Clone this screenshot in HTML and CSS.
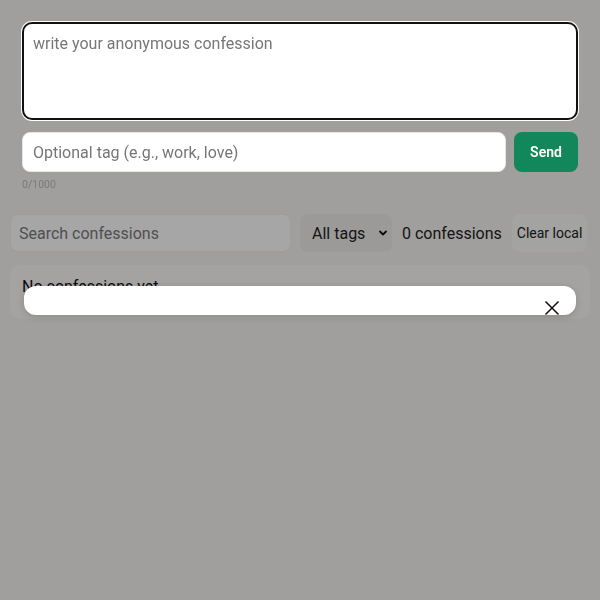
FILE: index.html
```html
<!DOCTYPE html>
<html lang="en">
<head>
<meta charset="utf-8">
<title>Confessions</title>
<link rel="stylesheet" href="styles.css">
</head>
<body>
<main class="page">
  <section class="composer">
    <textarea class="confession" placeholder="write your anonymous confession"></textarea>
    <div class="tag-row">
      <input class="tag-input" type="text" placeholder="Optional tag (e.g., work, love)">
      <button class="send-btn">Send</button>
    </div>
    <div class="counter">0/1000</div>
  </section>

  <section class="toolbar">
    <input class="search" type="text" placeholder="Search confessions">
    <div class="select-wrap">
      <select class="tag-select"><option>All tags</option></select>
      <svg class="chevron" viewBox="0 0 10 10" width="10" height="10"><path d="M2 3.5 L5 6.5 L8 3.5" fill="none" stroke="#111" stroke-width="1.8" stroke-linecap="round" stroke-linejoin="round"/></svg>
    </div>
    <span class="count">0 confessions</span>
    <button class="clear-btn">Clear local</button>
  </section>

  <section class="results">
    <p class="empty">No confessions yet</p>
  </section>
</main>

<div class="overlay"></div>
<div class="modal">
  <button class="close" aria-label="Close">
    <svg viewBox="0 0 16 16" width="16" height="16"><path d="M1.5 1.5 L14.5 14.5 M14.5 1.5 L1.5 14.5" stroke="#111" stroke-width="1.5" fill="none"/></svg>
  </button>
</div>
</body>
</html>
```

FILE: styles.css
```css
* { box-sizing: border-box; }

html, body {
  margin: 0;
  padding: 0;
  height: 100%;
}

body {
  background: #f6f4f1;
  font-family: Roboto, "Noto Sans", "Liberation Sans", sans-serif;
  color: #222;
}

.page {
  display: flex;
  flex-direction: column;
}

.composer {
  position: relative;
  z-index: 20;
  padding: 22px 22px 0;
  display: flex;
  flex-direction: column;
}

.confession {
  display: block;
  width: 100%;
  height: 98px;
  resize: none;
  border: 2px solid #111;
  border-radius: 10px;
  box-shadow: 0 0 0 1px #fff;
  background: #fff;
  padding: 10px 9px;
  font: 16px Roboto, "Noto Sans", sans-serif;
  color: #222;
  outline: none;
}

.confession::placeholder { color: #777; }

.tag-row {
  display: flex;
  gap: 8px;
  margin-top: 12px;
}

.tag-input {
  flex: 1;
  height: 40px;
  border: 1px solid #e6e6e4;
  border-radius: 8px;
  background: #fff;
  padding: 0 10px;
  font: 16px Roboto, "Noto Sans", sans-serif;
  outline: none;
}

.tag-input::placeholder { color: #767676; }

.send-btn {
  width: 64px;
  height: 40px;
  border: none;
  border-radius: 8px;
  background: #12875b;
  color: #fff;
  font: 600 14px Roboto, "Noto Sans", sans-serif;
}

.counter {
  margin-top: 7px;
  font-size: 10.5px;
  color: #7a7a7a;
  line-height: 12px;
}

.toolbar {
  display: flex;
  align-items: center;
  gap: 9px;
  padding: 0 12px 0 10px;
  margin-top: 23px;
}

.toolbar > * {
  flex: none;
  white-space: nowrap;
}

.search {
  width: 281px;
  height: 38px;
  border: 1px solid #f2f1ef;
  border-radius: 8px;
  background: #fff;
  padding: 0 8px;
  font: 16px Roboto, "Noto Sans", sans-serif;
  outline: none;
}

.search::placeholder { color: #7a7a7a; }

.select-wrap {
  position: relative;
  width: 92px;
  height: 38px;
}

.tag-select {
  appearance: none;
  -webkit-appearance: none;
  width: 100%;
  height: 100%;
  border: none;
  border-radius: 8px;
  background: #eeedeb;
  padding: 0 12px;
  font: 16px Roboto, "Noto Sans", sans-serif;
  color: #222;
}

.chevron {
  position: absolute;
  right: 4px;
  top: 14px;
  pointer-events: none;
}

.count {
  margin-left: 1px;
  font-size: 16px;
  color: #222;
}

.clear-btn {
  margin-left: 1px;
  height: 38px;
  padding: 0 5px;
  border: none;
  border-radius: 8px;
  background: #fbfaf8;
  font: 14px Roboto, "Noto Sans", sans-serif;
  color: #222;
}

.results {
  margin: 13px 10px 0;
  height: 54px;
  border-radius: 10px;
  background: #fcfbf9;
  padding: 12px;
}

.empty {
  margin: 0;
  font-size: 16px;
  line-height: 20px;
  color: #111;
}

.overlay {
  position: fixed;
  inset: 0;
  z-index: 10;
  background: rgba(0, 0, 0, 0.35);
}

.modal {
  position: fixed;
  z-index: 30;
  top: 286px;
  left: 24px;
  right: 24px;
  height: 29px;
  background: #fff;
  border-radius: 12px;
  box-shadow: 0 2px 8px rgba(0, 0, 0, 0.15);
}

.close {
  position: absolute;
  right: 16px;
  top: 14px;
  width: 16px;
  height: 16px;
  padding: 0;
  border: none;
  background: transparent;
  line-height: 0;
}
```
